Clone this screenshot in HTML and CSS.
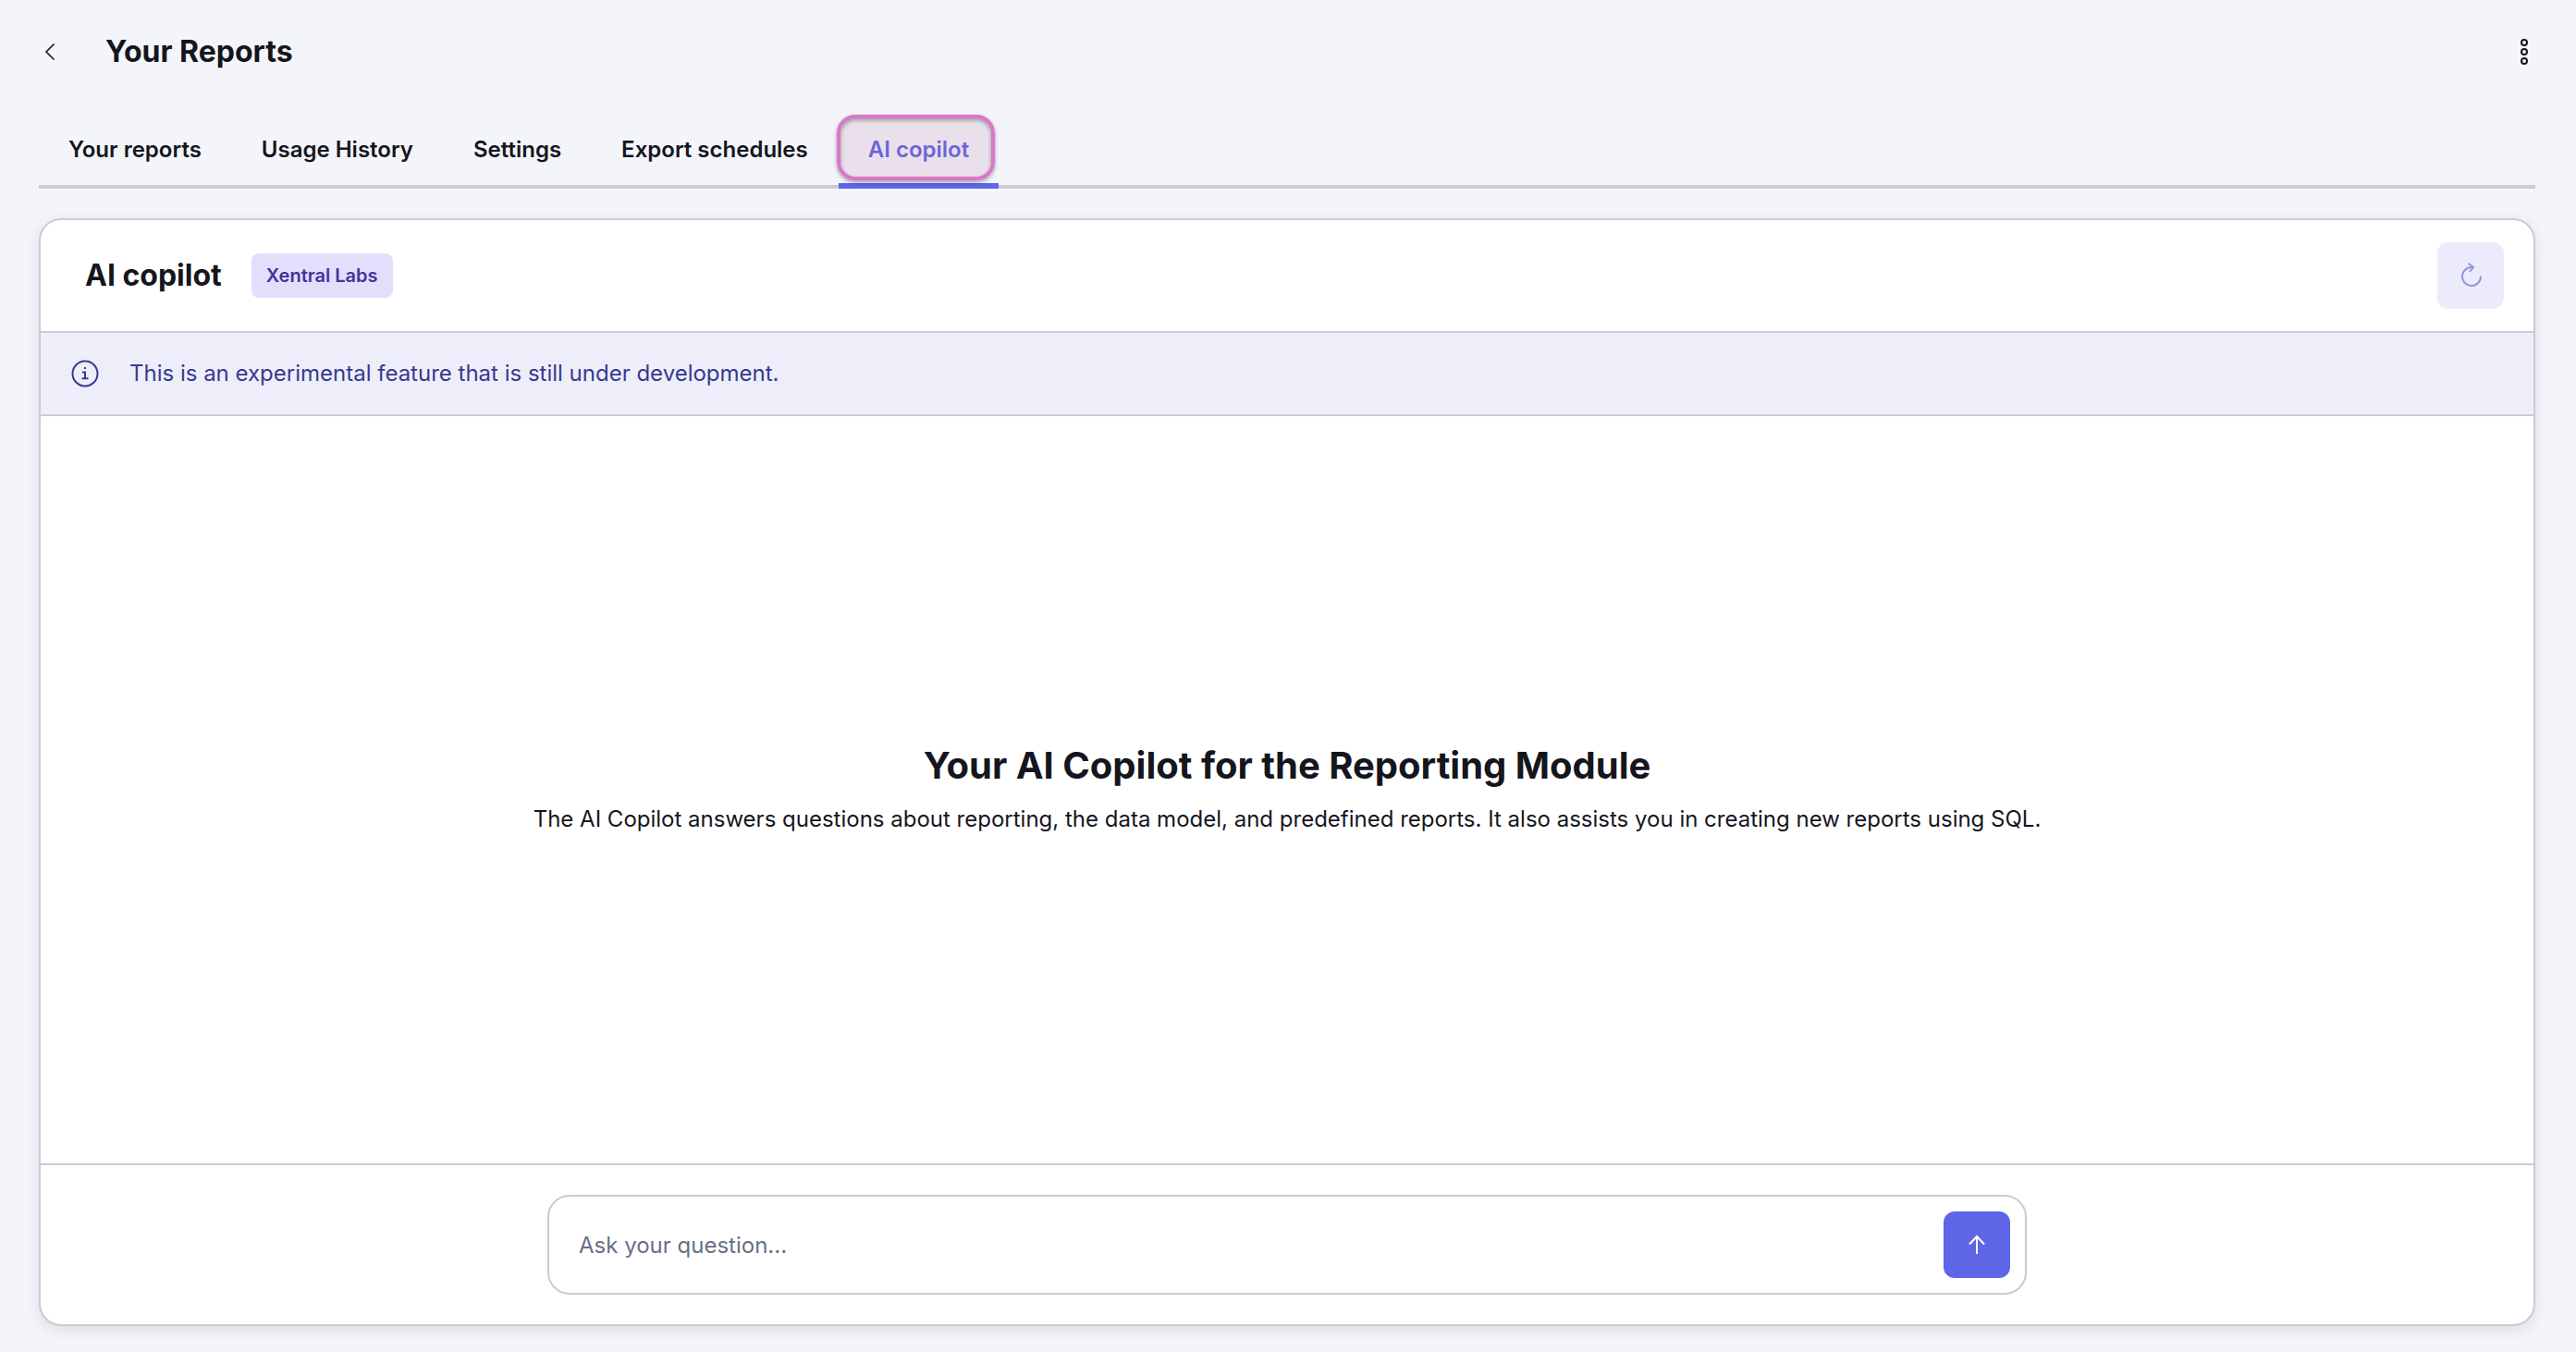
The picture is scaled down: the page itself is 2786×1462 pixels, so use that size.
FILE: index.html
```html
<!DOCTYPE html>
<html lang="en">
<head>
    <meta charset="UTF-8">
    <meta name="viewport" content="width=device-width, initial-scale=1.0">
    <title>Your Reports</title>

    <link rel="stylesheet" href="styles.css">
</head>
<body>
    <header class="page-header">
        <button class="icon-button" type="button" aria-label="Back">
            <svg width="12" height="20" viewBox="0 0 12 20"><path d="M10.5 1.5 L2 10 L10.5 18.5" stroke-width="1.6"/></svg>
        </button>
        <h1>Your Reports</h1>
        <button class="icon-button more" type="button" aria-label="More options">
            <svg width="8" height="28" viewBox="0 0 8 28">
                <circle cx="4" cy="4" r="3"/>
                <circle cx="4" cy="14" r="3"/>
                <circle cx="4" cy="24" r="3"/>
            </svg>
        </button>
    </header>

    <nav class="tabs">
        <a href="#reports">Your reports</a>
        <a href="#history">Usage History</a>
        <a href="#settings">Settings</a>
        <a href="#exports">Export schedules</a>
        <a href="#copilot" class="active">AI copilot</a>
    </nav>

    <main class="card">
        <div class="card-header">
            <h2>AI copilot</h2>
            <span class="badge">Xentral Labs</span>
            <button class="square-button refresh" type="button" aria-label="Restart chat" disabled>
                <svg width="28" height="28" viewBox="0 0 28 28">
                    <path d="M25 14.5 A10 10 0 1 1 15 5 H17"/>
                    <path d="M11.5 0.8 L17 4.9 L13 10"/>
                </svg>
            </button>
        </div>

        <div class="notice">
            <svg width="32" height="32" viewBox="0 0 32 32">
                <circle cx="16" cy="16" r="13.5"/>
                <path d="M13 14.5 H16 V21 M12.5 21.2 H19.5"/>
                <path d="M15 10 H17"/>
            </svg>
            <p>This is an experimental feature that is still under development.</p>
        </div>

        <section class="intro">
            <h3>Your AI Copilot for the Reporting Module</h3>
            <p>The AI Copilot answers questions about reporting, the data model, and predefined reports. It also assists you in creating new reports using SQL.</p>
        </section>

        <div class="card-footer">
            <form class="question">
                <input type="text" aria-label="Your question" placeholder="Ask your question...">
                <button class="square-button send" type="button" aria-label="Send">
                    <svg width="20" height="24" viewBox="0 0 20 24"><path d="M10 22 V3 M2 11.5 L10 3 L18 11.5"/></svg>
                </button>
            </form>
        </div>
    </main>
</body>
</html>
```
FILE: styles.css
```css
* {
    margin: 0;
    padding: 0;
    box-sizing: border-box;
}

body {
    min-height: 100vh;
    display: flex;
    flex-direction: column;
    padding: 0 44px 28px 42px;
    background-color: #f4f5fa;
    color: #15161d;
    font-family: Inter, "Liberation Sans", sans-serif;
    font-size: 24px;
    line-height: 36px;
}

svg {
    display: block;
    fill: none;
    stroke: currentColor;
    stroke-width: 2;
}

button {
    border: none;
    cursor: pointer;
}

/* Page header */
.page-header {
    height: 112px;
    display: flex;
    align-items: center;
}

.page-header h1 {
    margin-left: 48px;
    font-size: 32px;
    font-weight: 700;
    line-height: 40px;
}

.icon-button {
    padding: 6px;
    background: none;
    color: inherit;
}

.more {
    margin-left: auto;
    margin-right: 2px;
}

/* Tabs */
.tabs {
    display: flex;
    gap: 1px;
    margin-bottom: 32px;
    box-shadow: inset 0 -4px #cccdd4;
}

.tabs a {
    position: relative;
    padding: 32px 32px 24px;
    color: inherit;
    font-weight: 600;
    text-decoration: none;
}

.tabs .active {
    color: #5e65e6;
    box-shadow: inset 0 -6px #5e65e6;
}

.tabs .active::after {
    content: "";
    position: absolute;
    top: 12px;
    right: 4px;
    bottom: 9px;
    left: -2px;
    border: 4px solid #d977ca;
    border-radius: 20px;
    background-color: rgba(180, 110, 160, 0.15);
    box-shadow: 0 2px 4px rgba(0, 0, 0, 0.35), inset 0 2px 4px rgba(0, 0, 0, 0.35);
}

/* Card */
.card {
    flex: 1;
    display: flex;
    flex-direction: column;
    border: 2px solid #cacbd4;
    border-radius: 24px;
    background-color: white;
    box-shadow: 0 4px 16px rgba(20, 22, 30, 0.1);
}

.card-header {
    display: flex;
    align-items: center;
    gap: 32px;
    padding: 24px 32px 24px 48px;
    border-bottom: 2px solid #cacbd4;
}

.card-header h2 {
    font-size: 32px;
    font-weight: 700;
    line-height: 40px;
}

.badge {
    padding: 8px 16px;
    border-radius: 8px;
    background-color: #e3defc;
    color: #46329a;
    font-size: 20px;
    font-weight: 600;
    line-height: 32px;
}

.square-button {
    width: 72px;
    height: 72px;
    display: flex;
    align-items: center;
    justify-content: center;
    border-radius: 12px;
}

.refresh {
    margin-left: auto;
    background-color: #ecebfb;
    color: #9396dc;
}

.notice {
    display: flex;
    align-items: center;
    gap: 32px;
    padding: 26px 32px;
    border-bottom: 2px solid #cacbd4;
    background-color: #eeeefa;
    color: #373a8c;
}

.intro {
    flex: 1;
    display: flex;
    flex-direction: column;
    align-items: center;
    justify-content: center;
    gap: 16px;
    text-align: center;
}

.intro h3 {
    font-size: 40px;
    font-weight: 700;
    line-height: 48px;
}

.card-footer {
    padding: 32px;
    border-top: 2px solid #cacbd4;
}

.question {
    max-width: 1600px;
    display: flex;
    align-items: center;
    margin: 0 auto;
    padding: 16px;
    border: 2px solid #cacbd4;
    border-radius: 24px;
}

.question input {
    flex: 1;
    padding: 2px 16px 0;
    border: none;
    outline: none;
    background: none;
    color: inherit;
    font: inherit;
}

.question input::placeholder {
    color: #687085;
}

.send {
    background-color: #5e65e6;
    color: white;
}
```
